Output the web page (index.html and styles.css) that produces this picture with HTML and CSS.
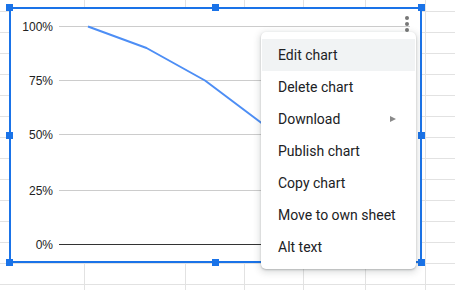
FILE: index.html
```html
<!DOCTYPE html>
<html>
<head>
<meta charset="utf-8">
<link rel="stylesheet" href="styles.css">
</head>
<body>
<div class="sheet">
  <div class="chart">
    <svg class="plot" width="409" height="252" viewBox="11 9 409 252">
      <g class="grid">
        <line x1="59" y1="26.5" x2="410" y2="26.5"/>
        <line x1="59" y1="80.5" x2="410" y2="80.5"/>
        <line x1="59" y1="134.5" x2="410" y2="134.5"/>
        <line x1="59" y1="190.5" x2="410" y2="190.5"/>
      </g>
      <line class="zero" x1="59" y1="244.5" x2="410" y2="244.5"/>
      <g class="labels">
        <text x="53" y="31">100%</text>
        <text x="53" y="85">75%</text>
        <text x="53" y="139">50%</text>
        <text x="53" y="195">25%</text>
        <text x="53" y="249">0%</text>
      </g>
      <polyline class="series" points="88,26.5 146.5,48 205,80.5 263.5,124.5 322,160 380.5,190"/>
      <g class="kebab">
        <circle cx="407" cy="18" r="2"/>
        <circle cx="407" cy="24" r="2"/>
        <circle cx="407" cy="30" r="2"/>
      </g>
    </svg>
    <span class="handle h-tl"></span>
    <span class="handle h-tm"></span>
    <span class="handle h-tr"></span>
    <span class="handle h-ml"></span>
    <span class="handle h-mr"></span>
    <span class="handle h-bl"></span>
    <span class="handle h-bm"></span>
    <span class="handle h-br"></span>
  </div>
  <ul class="menu">
    <li class="item active">Edit chart</li>
    <li class="item">Delete chart</li>
    <li class="item has-sub">Download <span class="arrow"></span></li>
    <li class="item">Publish chart</li>
    <li class="item">Copy chart</li>
    <li class="item">Move to own sheet</li>
    <li class="item">Alt text</li>
  </ul>
</div>
</body>
</html>
```
FILE: styles.css
```css
html, body {
  margin: 0;
  padding: 0;
  background: #ffffff;
}

.sheet {
  position: relative;
  width: 455px;
  height: 290px;
  overflow: hidden;
  background-color: #ffffff;
  background-image:
    linear-gradient(to right,
      transparent 0 84px, #e2e2e2 84px 85px,
      transparent 85px 185px, #e2e2e2 185px 186px,
      transparent 186px 244px, #e2e2e2 244px 245px,
      transparent 245px 303px, #e2e2e2 303px 304px,
      transparent 304px 365px, #e2e2e2 365px 366px,
      transparent 366px 425px, #e2e2e2 425px 426px,
      transparent 426px),
    linear-gradient(to bottom, #e2e2e2 0 1px, transparent 1px);
  background-size: 100% 100%, 100% 21px;
  background-position: 0 0, 0 11px;
  background-repeat: no-repeat, repeat;
}

.chart {
  position: absolute;
  left: 9px;
  top: 7px;
  width: 413px;
  height: 256px;
  box-sizing: border-box;
  border: 2px solid #1a73e8;
  background: #ffffff;
}

.plot {
  display: block;
}

.grid line {
  stroke: #cccccc;
  stroke-width: 1;
}

.zero {
  stroke: #333333;
  stroke-width: 1;
}

.labels text {
  font-family: "Liberation Sans", Arial, sans-serif;
  font-size: 12px;
  fill: #222222;
  text-anchor: end;
}

.series {
  fill: none;
  stroke: #4d8ef5;
  stroke-width: 2;
  stroke-linejoin: round;
}

.kebab circle {
  fill: #777777;
}

.handle {
  position: absolute;
  width: 7px;
  height: 7px;
  background: #1a73e8;
}

.h-tl { left: -5px; top: -5px; }
.h-tm { left: calc(50% - 3.5px); top: -5px; }
.h-tr { right: -5px; top: -5px; }
.h-ml { left: -5px; top: calc(50% - 3.5px); }
.h-mr { right: -5px; top: calc(50% - 3.5px); }
.h-bl { left: -5px; bottom: -5px; }
.h-bm { left: calc(50% - 3.5px); bottom: -5px; }
.h-br { right: -5px; bottom: -5px; }

.menu {
  position: absolute;
  left: 261px;
  top: 32px;
  width: 155px;
  margin: 0;
  padding: 7px 0 6px;
  list-style: none;
  background: #ffffff;
  border-radius: 5px;
  box-shadow: 0 2px 6px 2px rgba(60, 64, 67, 0.15), 0 1px 2px rgba(60, 64, 67, 0.3);
  font-family: Roboto, "Liberation Sans", sans-serif;
  font-size: 14px;
  color: #202124;
}

.item {
  display: flex;
  align-items: center;
  justify-content: space-between;
  height: 32px;
  padding: 0 19px 0 16px;
  margin: 0 1px;
  white-space: nowrap;
}

.item.active {
  background: #f1f3f4;
}

.arrow {
  width: 0;
  height: 0;
  border-left: 6px solid #8a8a8a;
  border-top: 3.5px solid transparent;
  border-bottom: 3.5px solid transparent;
}
```
